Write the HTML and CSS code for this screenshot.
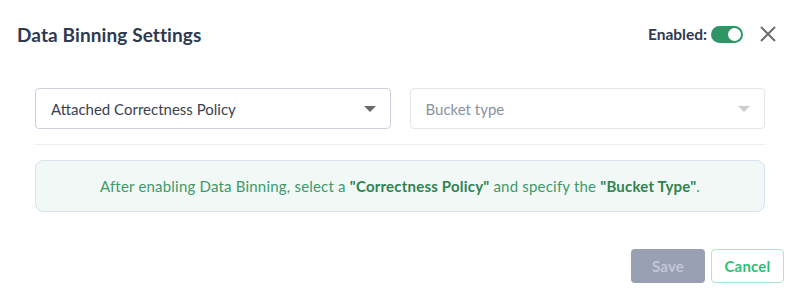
FILE: index.html
```html
<!DOCTYPE html>
<html>
<head>
<meta charset="utf-8">
<link rel="stylesheet" href="styles.css">
</head>
<body>
<div class="dialog">
  <div class="header">
    <h1 class="title">Data Binning Settings</h1>
    <div class="header-actions">
      <span class="enabled-label">Enabled:</span>
      <span class="toggle"><span class="knob"></span></span>
      <svg class="close" width="18" height="18" viewBox="0 0 18 18"><path d="M2 2 L16 16 M16 2 L2 16" stroke="#6e6e6e" stroke-width="2" fill="none"/></svg>
    </div>
  </div>
  <div class="body">
    <div class="selects">
      <div class="select">
        <span class="select-value">Attached Correctness Policy</span>
        <span class="caret"></span>
      </div>
      <div class="select disabled">
        <span class="select-placeholder">Bucket type</span>
        <span class="caret light"></span>
      </div>
    </div>
    <div class="divider"></div>
    <div class="info">After enabling Data Binning, select a <b>"Correctness Policy"</b> and specify the <b>"Bucket Type"</b>.</div>
  </div>
  <div class="footer">
    <button class="btn save">Save</button>
    <button class="btn cancel">Cancel</button>
  </div>
</div>
</body>
</html>
```
FILE: styles.css
```css
* { box-sizing: border-box; }
html, body { margin: 0; padding: 0; background: #fff; }
body { font-family: "Lato", "Noto Sans", sans-serif; color: #2d3a52; }
.dialog { width: 800px; height: 299px; display: flex; flex-direction: column; }
.header { display: flex; align-items: center; justify-content: space-between; padding: 21px 23px 0 17px; height: 47px; }
.title { margin: 0; font-size: 19px; font-weight: 700; color: #2d3a52; letter-spacing: 0.1px; }
.header-actions { display: flex; align-items: center; }
.enabled-label { font-size: 15.5px; font-weight: 700; color: #2d3a52; margin-right: 4px; }
.toggle { width: 32px; height: 17px; border-radius: 9px; background: #2e9566; position: relative; display: inline-block; }
.knob { position: absolute; right: 2px; top: 2px; width: 13px; height: 13px; border-radius: 50%; background: #fff; }
.close { margin-left: 16px; }
.body { padding: 41px 35px 0 35px; }
.selects { display: flex; gap: 19px; }
.select { flex: 1; height: 41px; border: 1px solid #cbd2de; border-radius: 4px; display: flex; align-items: center; justify-content: space-between; padding: 0 14px 0 15px; font-size: 15px; }
.select.disabled { border-color: #e3e6ec; }
.select-value { color: #3a4252; }
.select-placeholder { color: #8a929f; }
.caret { width: 0; height: 0; border-left: 6px solid transparent; border-right: 6px solid transparent; border-top: 6px solid #6b6b6b; }
.caret.light { border-top-color: #c9ccd2; }
.divider { height: 1px; background: #eceef2; margin-top: 15px; }
.info { margin-top: 15px; height: 52px; border: 1px solid #d8e2ef; border-radius: 8px; background: #f2f8f6; display: flex; align-items: center; justify-content: center; font-size: 15px; letter-spacing: 0.2px; color: #3d9a6b; white-space: pre; }
.info b { color: #2f8352; font-weight: 700; }
.footer { display: flex; justify-content: flex-end; gap: 6px; padding: 37px 16px 0 0; }
.btn { height: 34px; border-radius: 4px; font-family: inherit; font-size: 15px; font-weight: 700; cursor: pointer; letter-spacing: 0.2px; }
.save { width: 74px; background: #9aa0b4; border: none; color: #c2c7d4; }
.cancel { width: 73px; background: #fff; border: 1px solid #a9e8c9; color: #2fbf78; }
```
